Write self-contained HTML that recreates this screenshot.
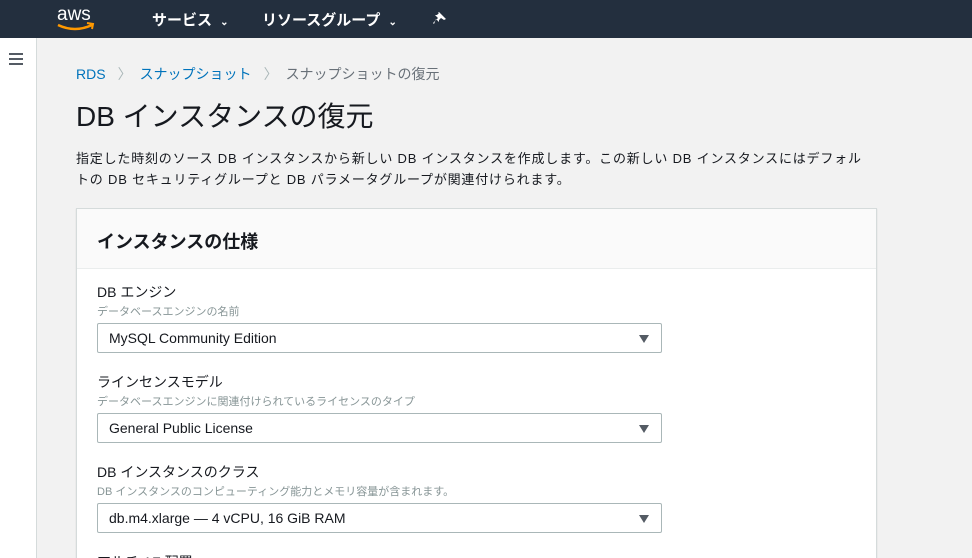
<!DOCTYPE html><html><head><meta charset="utf-8"><style>
*{margin:0;padding:0;box-sizing:border-box}
html,body{width:972px;height:558px;overflow:hidden}
body{background:#f2f2f2;font-family:"Liberation Sans","Noto Sans CJK JP",sans-serif;color:#16191f;position:relative}
.top{position:absolute;left:0;top:0;width:972px;height:38px;background:#232f3e;color:#fff}
.top .n{position:absolute;top:9px;font-size:15px;font-weight:bold}
.side{position:absolute;left:0;top:38px;width:37px;height:520px;background:#fff;border-right:1px solid #d5dbdb}
.bc{position:absolute;left:76px;top:64px;font-size:14px;color:#0073bb}
.bc span.s{color:#aab7b8;margin:0 8px 0 12px}
h1{position:absolute;left:76px;top:95px;font-size:28px;font-weight:normal;color:#16191f}
.desc{position:absolute;left:76px;top:148px;font-size:13px;line-height:21px;width:880px;white-space:nowrap;letter-spacing:0.8px;color:#16191f}
.card{position:absolute;left:76px;top:208px;width:801px;height:360px;background:#fff;border:1px solid #d5dbdb;box-shadow:0 1px 1px rgba(0,0,0,.15)}
.ch{height:60px;background:#fafafa;border-bottom:1px solid #eaeded;padding:19px 20px;font-size:18px;font-weight:bold}
.f{position:absolute;left:20px}
.f .l{font-size:14px;color:#16191f}
.f .d{font-size:11px;color:#879596;margin-top:1px}
.f .sel{margin-top:4px;width:565px;height:30px;border:1px solid #aab7b8;border-radius:2px;font-size:14px;padding:6px 11px;position:relative}
.sel:after{content:"";position:absolute;right:12px;top:11px;border-left:5px solid transparent;border-right:5px solid transparent;border-top:8px solid #545b64}
</style></head><body>
<div class="top">
<svg style="position:absolute;left:55px;top:2px" width="45" height="30" viewBox="0 0 45 30"><text x="2" y="18" font-family="Liberation Sans" font-size="19" fill="#fff">aws</text><path d="M3 23 Q20 31 37 23" stroke="#f90" stroke-width="2.5" fill="none"/><path d="M32 21 L38 22 L37 27" stroke="#f90" stroke-width="2" fill="none"/></svg>
<div class="n" style="left:152px">サービス <span style="font-size:10px;margin-left:4px">⌄</span></div>
<div class="n" style="left:262px">リソースグループ <span style="font-size:10px;margin-left:4px">⌄</span></div>
<svg style="position:absolute;left:433px;top:11px" width="14" height="14" viewBox="0 0 14 14"><path d="M6 1 L13 8 L11 9 L8 7 L6 9 L6 11 L3 8 L1 13 L0 12 L5 7 L2 4 L4 4 L6 2 L5 1 Z" fill="#fff"/></svg>
</div>
<div class="side"><div style="position:absolute;left:9px;top:15px;width:14px;height:2px;background:#545b64;box-shadow:0 5px 0 #545b64,0 10px 0 #545b64"></div></div>
<div class="bc">RDS<span class="s">〉</span>スナップショット<span class="s">〉</span><span style="color:#687078">スナップショットの復元</span></div>
<h1>DB インスタンスの復元</h1>
<div class="desc">指定した時刻のソース DB インスタンスから新しい DB インスタンスを作成します。この新しい DB インスタンスにはデフォル<br>トの DB セキュリティグループと DB パラメータグループが関連付けられます。</div>
<div class="card">
<div class="ch">インスタンスの仕様</div>
<div class="f" style="top:73px"><div class="l">DB エンジン</div><div class="d">データベースエンジンの名前</div><div class="sel">MySQL Community Edition</div></div>
<div class="f" style="top:163px"><div class="l">ラインセンスモデル</div><div class="d">データベースエンジンに関連付けられているライセンスのタイプ</div><div class="sel">General Public License</div></div>
<div class="f" style="top:253px"><div class="l">DB インスタンスのクラス</div><div class="d">DB インスタンスのコンピューティング能力とメモリ容量が含まれます。</div><div class="sel">db.m4.xlarge — 4 vCPU, 16 GiB RAM</div></div>
<div class="f" style="top:343px"><div class="l">マルチ AZ 配置</div></div>
</div>
</body></html>
